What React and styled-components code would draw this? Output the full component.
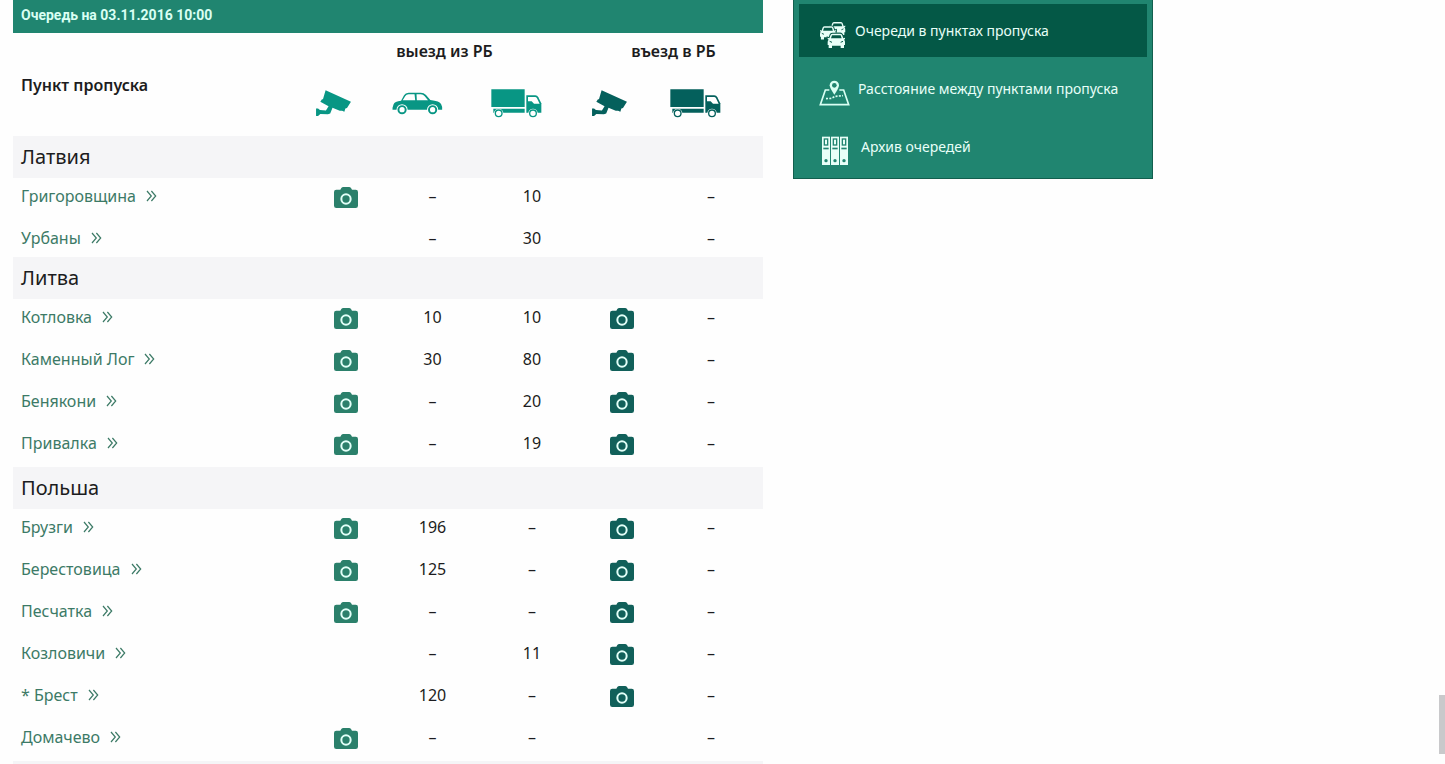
import React from 'react'
import styled, { createGlobalStyle } from 'styled-components'

const countries = [
  {
    name: 'Латвия',
    points: [
      { name: 'Григоровщина', outCam: true, car: '–', truck: '10', inCam: false, inTruck: '–' },
      { name: 'Урбаны', outCam: false, car: '–', truck: '30', inCam: false, inTruck: '–', short: true },
    ],
  },
  {
    name: 'Литва',
    points: [
      { name: 'Котловка', outCam: true, car: '10', truck: '10', inCam: true, inTruck: '–' },
      { name: 'Каменный Лог', outCam: true, car: '30', truck: '80', inCam: true, inTruck: '–' },
      { name: 'Бенякони', outCam: true, car: '–', truck: '20', inCam: true, inTruck: '–' },
      { name: 'Привалка', outCam: true, car: '–', truck: '19', inCam: true, inTruck: '–' },
    ],
  },
  {
    name: 'Польша',
    points: [
      { name: 'Брузги', outCam: true, car: '196', truck: '–', inCam: true, inTruck: '–' },
      { name: 'Берестовица', outCam: true, car: '125', truck: '–', inCam: true, inTruck: '–' },
      { name: 'Песчатка', outCam: true, car: '–', truck: '–', inCam: true, inTruck: '–' },
      { name: 'Козловичи', outCam: false, car: '–', truck: '11', inCam: true, inTruck: '–' },
      { name: '* Брест', outCam: false, car: '120', truck: '–', inCam: true, inTruck: '–' },
      { name: 'Домачево', outCam: true, car: '–', truck: '–', inCam: false, inTruck: '–' },
    ],
  },
]

const light = '#089684'
const dark = '#04605c'

function Surveillance({ color, label }) {
  return (
    <svg width="37" height="27" viewBox="46 176 110 82" fill={color} role="img" aria-label={label}>
      <path d="M77 177 L154 212 L142 231 L137 232 L134 242 L127 239 L120 239 L98 230 L91 247 L84 250 L61 249 L54 255 L48 255 L48 232 L54 232 L60 237 L78 238 L86 225 L61 212 L66 204 L69 204 Z" />
    </svg>
  )
}

function Car() {
  return (
    <svg width="51" height="23" viewBox="275 184 154 70" fill={light} role="img" aria-label="Легковые">
      <path d="M276 238 L276 232 L279 222 Q282 213 302 211 L311 194 Q315 186 325 186 L362 186 Q371 186 378 193 L391 208 Q420 211 424 221 L427 230 L427 238 Z" />
      <path fill="#fff" d="M307 209 L315 196 Q318 191 325 191 L343 191 L345 209 Z M349 191 L362 191 Q369 191 374 197 L384 209 L350 209 Z" />
      <circle cx="305" cy="238" r="17" fill="#fff" />
      <circle cx="398" cy="238" r="17" fill="#fff" />
      <circle cx="305" cy="238" r="11" fill="#fff" stroke={light} strokeWidth="6" />
      <circle cx="398" cy="238" r="11" fill="#fff" stroke={light} strokeWidth="6" />
    </svg>
  )
}

function Truck({ color }) {
  return (
    <svg width="51" height="29" viewBox="572 176 153 87" fill={color} role="img" aria-label="Грузовые">
      <path d="M573 177 H673 V230 H573 Z M579 235 H673 V247 H579 Z" />
      <path d="M678 195 H705 Q711 195 714 201 L723 219 V247 H678 Z" />
      <path fill="#fff" d="M683 200 H704 Q708 200 710 204 L718 220 H701 L694 213 H683 Z" />
      <circle cx="595" cy="249" r="14" fill="#fff" />
      <circle cx="698" cy="249" r="14" fill="#fff" />
      <circle cx="595" cy="249" r="10" fill="#fff" stroke={color} strokeWidth="4" />
      <circle cx="698" cy="249" r="10" fill="#fff" stroke={color} strokeWidth="4" />
    </svg>
  )
}

function Photo({ color }) {
  return (
    <svg width="24" height="21" viewBox="0 0 72 63">
      <path fill={color} d="M22 3 Q24 0 28 0 H45 Q49 0 51 3 L54 8 H65 Q72 8 72 15 V56 Q72 63 65 63 H7 Q0 63 0 56 V15 Q0 8 7 8 H19 Z" />
      <circle cx="36" cy="36" r="14" fill="none" stroke="#e2fff8" strokeWidth="6" />
    </svg>
  )
}

function Chevrons() {
  return (
    <svg width="11" height="12" viewBox="0 0 11 12" fill="none" stroke="currentColor" strokeWidth="1.2">
      <path d="M1 1 L5.3 6 L1 11 M5.4 1 L9.7 6 L5.4 11" />
    </svg>
  )
}

function FrontCar({ place }) {
  return (
    <g transform={place}>
      <path stroke="#045846" strokeWidth="6" paintOrder="stroke" d="M9 3 Q11 0 15 0 H37 Q41 0 43 3 L47 14 L52 12 V16 L49 18 Q52 20 52 25 V34 H49 V43 H39 V36 H13 V43 H3 V34 H0 V25 Q0 20 3 18 L0 16 V12 L5 14 Z" />
      <path fill="#045846" d="M13 5 H39 L42 14 H10 Z" />
      <path stroke="#045846" strokeWidth="3" d="M6 23 L13 26 M46 23 L39 26" />
    </g>
  )
}

function QueueIcon() {
  return (
    <svg width="28" height="28" viewBox="101 66 84 84" fill="#e8fff8">
      <FrontCar place="translate(133 69) scale(.9)" />
      <FrontCar place="translate(104 82) scale(.92)" />
      <FrontCar place="translate(127 104)" />
    </svg>
  )
}

function MapIcon() {
  return (
    <svg width="31" height="28" viewBox="101 237 93 84" fill="none" stroke="#d9fff3" strokeWidth="5">
      <path d="M132 270 H120 L105 314 H190 L175 270 H162" />
      <path fill="#d9fff3" stroke="none" d="M147 242 a14 14 0 0 1 14 14 q0 8 -14 28 q-14 -20 -14 -28 a14 14 0 0 1 14 -14z" />
      <circle cx="147" cy="256" r="7" fill="#208570" stroke="none" />
      <path strokeDasharray="6 4" d="M122 296 L138 295 L150 289 L173 287" />
    </svg>
  )
}

function ArchiveIcon() {
  return (
    <svg width="34" height="30" viewBox="102 408 102 90" fill="#e8fff8">
      {[111, 138, 165].map((x) => (
        <g key={x}>
          <rect x={x} y="410" width="24" height="85" />
          <rect x={x + 7} y="417" width="10" height="18" fill="none" stroke="#208570" strokeWidth="4" />
          <rect x={x + 4} y="443" width="16" height="5" fill="#208570" />
          <circle cx={x + 12} cy="482" r="5" fill="#208570" />
        </g>
      ))}
    </svg>
  )
}

function App() {
  return (
    <Page>
      <GlobalStyle />
      <Board>
        <caption>Очередь на 03.11.2016 10:00</caption>
        <colgroup>
          <Col $share={292} />
          <Col $share={80} />
          <Col $share={95} />
          <Col $share={104} />
          <Col $share={75} />
          <Col $share={104} />
        </colgroup>
        <thead>
          <tr>
            <PlaceHead rowSpan="2" scope="col">Пункт пропуска</PlaceHead>
            <Direction colSpan="3" scope="colgroup">выезд из РБ</Direction>
            <Direction colSpan="2" scope="colgroup">въезд в РБ</Direction>
          </tr>
          <tr>
            <IconHead scope="col" $camera><Surveillance color={light} label="Камера" /></IconHead>
            <IconHead scope="col"><Car /></IconHead>
            <IconHead scope="col"><Truck color={light} /></IconHead>
            <IconHead scope="col" $camera><Surveillance color={dark} label="Камера" /></IconHead>
            <IconHead scope="col"><Truck color={dark} /></IconHead>
          </tr>
        </thead>
        {countries.map((country) => (
          <tbody key={country.name}>
            <tr>
              <Country colSpan="6" scope="rowgroup">{country.name}</Country>
            </tr>
            {country.points.map((point) => (
              <Row key={point.name} $short={point.short}>
                <Place scope="row">
                  <a href="#">{point.name}<Chevrons /></a>
                </Place>
                <PhotoCell>{point.outCam && <a href="#" aria-label="Камера на выезд"><Photo color="#2b806b" /></a>}</PhotoCell>
                <Count>{point.car}</Count>
                <Count>{point.truck}</Count>
                <PhotoCell>{point.inCam && <a href="#" aria-label="Камера на въезд"><Photo color="#11605a" /></a>}</PhotoCell>
                <Count>{point.inTruck}</Count>
              </Row>
            ))}
          </tbody>
        ))}
      </Board>
      <Menu>
        <MenuLink href="#" $active><QueueIcon />Очереди в пунктах пропуска</MenuLink>
        <MenuLink href="#"><MapIcon />Расстояние между пунктами пропуска</MenuLink>
        <MenuLink href="#"><ArchiveIcon />Архив очередей</MenuLink>
      </Menu>
      <Thumb />
    </Page>
  )
}

export default App

const GlobalStyle = createGlobalStyle`
    body {
        margin: 0;
        background: #fefefe;
    }

    * {
        box-sizing: border-box;
    }

    a {
        text-decoration: none;
    }
    `

const Page = styled.main`
    display: flex;
    align-items: flex-start;
    gap: 30px;
    height: 100vh;
    padding-left: 13px;
    overflow: hidden;
    font-family: "Noto Sans", sans-serif;
    `

const Board = styled.table`
    flex: 0 1 750px;
    width: 750px;
    table-layout: fixed;
    border-spacing: 0;
    border-bottom: 3px solid #f5f5f7;
    color: #1c1c20;
    font-size: 16px;
    line-height: 20px;

    caption {
        height: 33px;
        padding: 5px 8px;
        background: #208570;
        color: #d9fff3;
        font-family: Roboto, sans-serif;
        font-size: 14px;
        font-weight: 700;
        text-align: left;
    }

    th, td {
        padding: 0;
    }

    svg {
        display: inline-block;
        vertical-align: middle;
    }
    `

const Col = styled.col`
    width: ${(props) => (props.$share / 750) * 100}%;
    `

const PlaceHead = styled.th`
    && {
        padding-left: 8px;
    }
    font-weight: 600;
    text-align: left;
    `

const Direction = styled.th`
    height: 36px;
    font-weight: 600;
    `

const IconHead = styled.th`
    && {
        padding: 2px ${(props) => (props.$camera ? 24 : 30)}px 0 0;
    }
    height: 67px;
    `

const Country = styled.th`
    && {
        padding-left: 8px;
    }
    height: 42px;
    background: #f5f5f7;
    font-size: 20px;
    font-weight: 400;
    text-align: left;
    `

const Row = styled.tr`
    height: ${(props) => (props.$short ? 37 : 42)}px;
    vertical-align: top;
    `

const Place = styled.th`
    && {
        padding: 8px 0 0 8px;
    }
    font-weight: 400;
    text-align: left;

    a {
        display: flex;
        align-items: center;
        gap: 10px;
        color: #3c7a66;
    }
    `

const PhotoCell = styled.td`
    && {
        padding: 8px 0 0 2px;
    }
    text-align: center;
    `

const Count = styled.td`
    && {
        padding-top: 8px;
    }
    text-align: center;
    `

const Menu = styled.nav`
    display: flex;
    flex: 0 1 360px;
    flex-direction: column;
    gap: 5px;
    padding: 4px 5px 5px;
    border: 1px solid #125f4e;
    border-top: 0;
    background: #208570;
    `

const MenuLink = styled.a`
    display: flex;
    align-items: center;
    gap: 8px;
    height: 53px;
    padding-left: 20px;
    background: ${(props) => (props.$active ? '#045846' : 'transparent')};
    color: #e8fff8;
    font-size: 14px;
    line-height: 20px;
    white-space: nowrap;

    svg {
        flex: none;
        margin-top: 9px;
    }
    `

// scroll thumb on the window edge
const Thumb = styled.div`
    position: absolute;
    top: 695px;
    right: 0;
    width: 6px;
    height: 59px;
    background: #c9c9cb;
    `
